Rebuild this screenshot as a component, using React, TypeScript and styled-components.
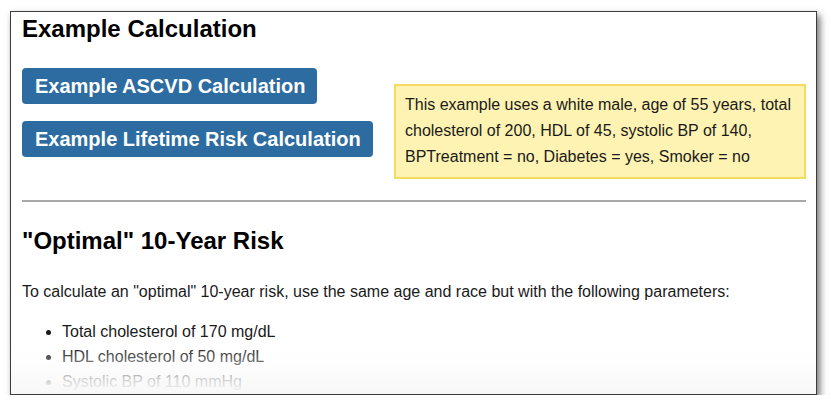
import React from "react";
import styled, { createGlobalStyle } from "styled-components";

const Global = createGlobalStyle`
  html, body { margin: 0; padding: 0; background: #ffffff; }
  body { font-family: "Liberation Sans", Arial, sans-serif; color: #222; }
`;

const Frame = styled.div`
  position: relative;
  box-sizing: border-box;
  margin: 11px 0 0 10px;
  width: 807px;
  height: 384px;
  border: 1px solid #3c3c3c;
  background: #fff;
  overflow: hidden;
  box-shadow: 3px 4px 7px rgba(0, 0, 0, 0.55);
`;

const Content = styled.div`
  padding: 0 10px 0 11px;
`;

const Heading = styled.h2<{ $top: number }>`
  margin: ${(p) => p.$top}px 0 0;
  font-size: 24px;
  line-height: 28px;
  font-weight: bold;
  color: #000;
`;

const ExampleRow = styled.div`
  display: flex;
  align-items: flex-start;
  justify-content: space-between;
  margin-top: 25px;
`;

const ButtonStack = styled.div`
  display: flex;
  flex-direction: column;
  align-items: flex-start;
  gap: 17px;
`;

const ActionButton = styled.button`
  box-sizing: border-box;
  height: 36px;
  padding: 0 12px 0 13px;
  border: none;
  border-radius: 4px;
  background: #2d6ca1;
  color: #fff;
  font-family: "Liberation Sans", Arial, sans-serif;
  font-size: 20px;
  font-weight: bold;
  line-height: 36px;
  cursor: pointer;
`;

const NoteBox = styled.div`
  box-sizing: border-box;
  width: 412px;
  margin-top: 16px;
  padding: 6px 8px 7px 9px;
  border: 2px solid #f6dc5e;
  background: #fef3b2;
  font-size: 16px;
  line-height: 26px;
  color: #1a1a1a;
`;

const Rule = styled.hr`
  margin: 21px 0 0;
  border: none;
  border-top: 2px solid #a8a8a8;
  height: 0;
`;

const Paragraph = styled.p`
  margin: 25px 0 0;
  font-size: 16px;
  line-height: 24px;
  color: #1a1a1a;
`;

const List = styled.ul`
  margin: 15px 0 0;
  padding-left: 40px;
  font-size: 16px;
  line-height: 25px;
  color: #1a1a1a;
`;

const Fade = styled.div`
  position: absolute;
  left: 0;
  right: 0;
  bottom: 0;
  height: 48px;
  background: linear-gradient(
    to bottom,
    rgba(255, 255, 255, 0) 0%,
    rgba(252, 252, 252, 0.4) 35%,
    rgba(249, 249, 249, 0.82) 70%,
    rgba(248, 248, 248, 1) 100%
  );
  pointer-events: none;
`;

export default function App() {
  return (
    <>
      <Global />
      <Frame>
        <Content>
          <Heading $top={3}>Example Calculation</Heading>
          <ExampleRow>
            <ButtonStack>
              <ActionButton>Example ASCVD Calculation</ActionButton>
              <ActionButton>Example Lifetime Risk Calculation</ActionButton>
            </ButtonStack>
            <NoteBox>
              This example uses a white male, age of 55 years, total
              cholesterol of 200, HDL of 45, systolic BP of 140, BPTreatment =
              no, Diabetes = yes, Smoker = no
            </NoteBox>
          </ExampleRow>
          <Rule />
          <Heading $top={25}>"Optimal" 10-Year Risk</Heading>
          <Paragraph>
            To calculate an "optimal" 10-year risk, use the same age and race
            but with the following parameters:
          </Paragraph>
          <List>
            <li>Total cholesterol of 170 mg/dL</li>
            <li>HDL cholesterol of 50 mg/dL</li>
            <li>Systolic BP of 110 mmHg</li>
          </List>
        </Content>
        <Fade />
      </Frame>
    </>
  );
}
